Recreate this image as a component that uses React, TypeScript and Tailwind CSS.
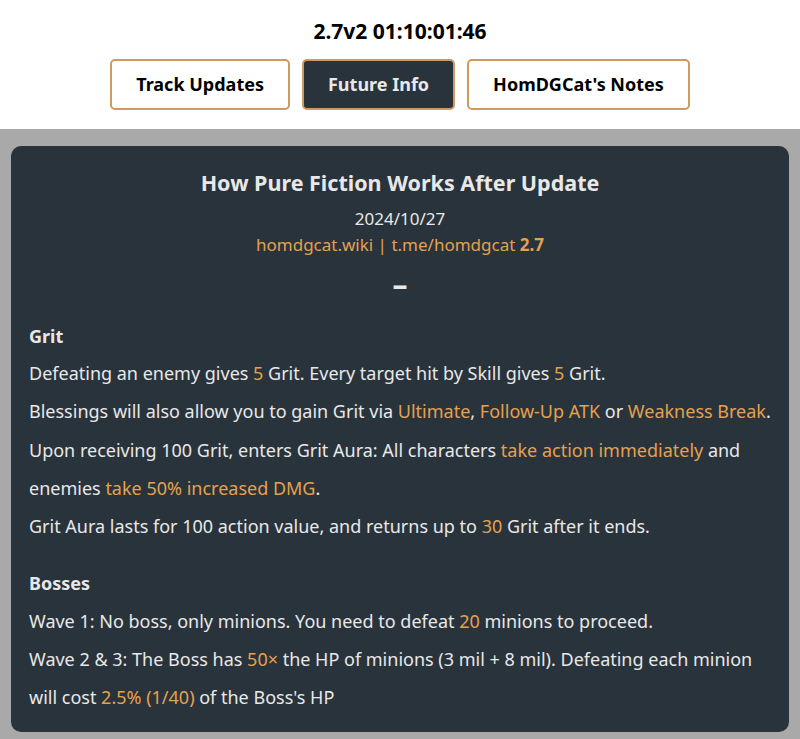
const font = "font-['Noto_Sans','Open_Sans',sans-serif]";

function Hl({ children, bold = false }: { children: React.ReactNode; bold?: boolean }) {
  return <span className={`text-[#e5a14f] ${bold ? "font-bold" : ""}`}>{children}</span>;
}

const tabs = ["Track Updates", "Future Info", "HomDGCat's Notes"];

export default function App() {
  return (
    <div className={`min-h-[739px] bg-[#a9a9a9] ${font}`}>
      {/* header */}
      <div className="bg-white pt-[16px] pb-[19px]">
        <div className="text-center text-[21px] font-bold leading-[30px] text-black">2.7v2 01:10:01:46</div>
        <div className="mt-[13px] flex justify-center gap-[12px]">
          {tabs.map((t, i) => (
            <button
              key={t}
              className={`h-[51px] rounded-[5px] border-2 border-[#cf9a5e] px-[24px] text-[18px] font-bold ${
                i === 1 ? "bg-[#29333b] text-[#e8e8e8]" : "bg-white text-black"
              }`}
            >
              {t}
            </button>
          ))}
        </div>
      </div>

      {/* card */}
      <div className="px-[11px] pt-[17px] pb-[7px]">
        <div className="rounded-[10px] bg-[#29333b] px-[18px] pt-[22px] pb-[16px] text-[18px] text-[#e8e8e8]">
          <div className="text-center">
            <div className="text-[21.5px] font-bold leading-[30px]">How Pure Fiction Works After Update</div>
            <div className="mt-[8px] text-[17px] leading-[26px]">2024/10/27</div>
            <div className="text-[17px] leading-[26px]">
              <Hl>homdgcat.wiki | t.me/homdgcat</Hl> <Hl bold>2.7</Hl>
            </div>
            <div className="mt-[13px] text-[30px] font-bold leading-[28px]">–</div>
          </div>

          <div className="mt-[22px] text-[18px] font-bold leading-[30px]">Grit</div>
          <div className="mt-[3px] leading-[38.25px]">
            <div>
              Defeating an enemy gives <Hl>5</Hl> Grit. Every target hit by Skill gives <Hl>5</Hl> Grit.
            </div>
            <div>
              Blessings will also allow you to gain Grit via <Hl>Ultimate</Hl>, <Hl>Follow-Up ATK</Hl> or{" "}
              <Hl>Weakness Break</Hl>.
            </div>
            <div>
              Upon receiving 100 Grit, enters Grit Aura: All characters <Hl>take action immediately</Hl> and enemies{" "}
              <Hl>take 50% increased DMG</Hl>.
            </div>
            <div>
              Grit Aura lasts for 100 action value, and returns up to <Hl>30</Hl> Grit after it ends.
            </div>
          </div>

          <div className="mt-[23px] text-[18px] font-bold leading-[30px]">Bosses</div>
          <div className="mt-[4px] leading-[38px]">
            <div>
              Wave 1: No boss, only minions. You need to defeat <Hl>20</Hl> minions to proceed.
            </div>
            <div>
              Wave 2 &amp; 3: The Boss has <Hl>50×</Hl> the HP of minions (3 mil + 8 mil). Defeating each minion will
              cost <Hl>2.5% (1/40)</Hl> of the Boss's HP
            </div>
          </div>
        </div>
      </div>
    </div>
  );
}
